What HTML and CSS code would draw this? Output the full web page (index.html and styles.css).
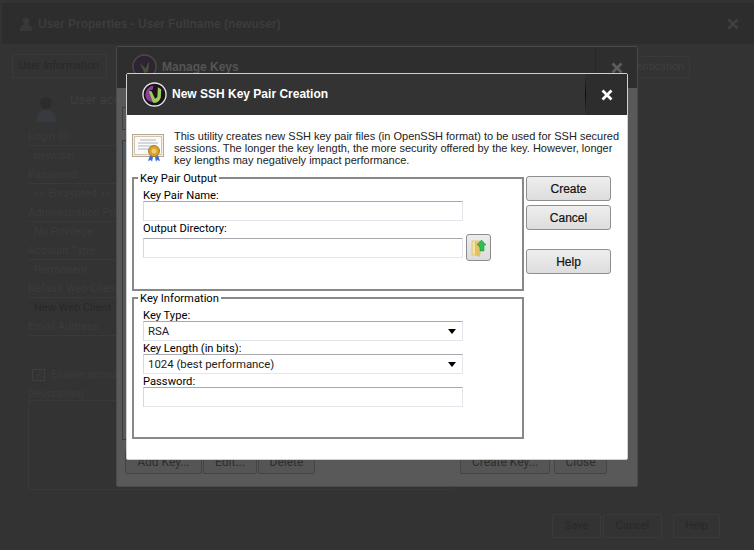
FILE: index.html
```html
<!DOCTYPE html>
<html lang="en">
<head>
<meta charset="utf-8">
<title>New SSH Key Pair Creation</title>
<link rel="stylesheet" href="styles.css">
</head>
<body>
<div class="stage">

  <section class="win-back">
    <header class="back-head">
      <svg class="back-user" viewBox="0 0 12 14" width="12" height="14"><circle cx="6" cy="4" r="3.200" fill="#383838"/><path d="M0 14c0-5 2.500-7 6-7s6 2 6 7z" fill="#383838"/></svg>
      <h1 class="back-title">User Properties - User Fullname (newuser)</h1>
      <svg class="back-close" viewBox="0 0 12 12" width="12" height="12"><path d="M1.500 1.500l9 9M10.500 1.500l-9 9" stroke="#3f3f3f" stroke-width="2.600" fill="none"/></svg>
    </header>
    <nav class="back-tabs">
      <span class="back-tab">User Information</span>
      <span class="back-spacer"></span>
      <span class="back-tab back-tab-end">Authentication</span>
    </nav>
    <div class="back-body">
      <div class="back-user-row">
        <svg class="back-avatar" viewBox="0 0 20 26" width="20" height="26"><circle cx="10" cy="7" r="6" fill="#2c2c2c"/><path d="M0 26c0-9 4-12 10-12s10 3 10 12z" fill="#373a3e"/></svg>
        <span class="back-note">User account details</span>
      </div>
      <div class="back-label">Login ID:</div>
      <div class="back-value">newuser</div>
      <div class="back-label">Password:</div>
      <div class="back-value">&lt;&lt; Encrypted &gt;&gt;</div>
      <div class="back-label">Administration Privilege:</div>
      <div class="back-value">No Privilege</div>
      <div class="back-label">Account Type:</div>
      <div class="back-value">Permanent</div>
      <div class="back-label">Default Web Client:</div>
      <div class="back-value back-strong">New Web Client</div>
      <div class="back-label">Email Address:</div>
      <div class="back-check"><span class="back-box">✓</span><span>Enable account</span></div>
      <div class="back-label back-plain">Description:</div>
      <div class="back-desc"></div>
    </div>
    <footer class="back-foot">
      <span class="back-btn back-save">Save</span>
      <span class="back-btn back-cancel">Cancel</span>
      <span class="back-btn back-help">Help</span>
    </footer>
  </section>

  <section class="win-keys">
    <header class="keys-head">
      <svg class="keys-logo" viewBox="0 0 26 26" width="25" height="25"><circle cx="13" cy="13" r="12" fill="#2c2430" stroke="#4a4a4a" stroke-width="1.500"/><path d="M8 9l5 11 4-2 1-11-4 8z" fill="#47503a"/></svg>
      <h2 class="keys-title">Manage Keys</h2>
      <span class="keys-closebox">
        <svg viewBox="0 0 12 12" width="12" height="12"><path d="M1.500 1.500l9 9M10.500 1.500l-9 9" stroke="#5c5c5c" stroke-width="2.800" fill="none"/></svg>
      </span>
    </header>
    <div class="keys-body">
      <div class="keys-tool"></div>
      <div class="keys-list"></div>
      <div class="keys-actions">
        <span class="keys-btn keys-add">Add Key...</span>
        <span class="keys-btn keys-edit">Edit...</span>
        <span class="keys-btn keys-del">Delete</span>
        <span class="keys-gap"></span>
        <span class="keys-btn keys-create">Create Key...</span>
        <span class="keys-btn keys-closebtn">Close</span>
      </div>
    </div>
  </section>

  <section class="win-new">
    <header class="new-head">
      <svg class="new-logo" viewBox="0 0 26 26" width="25" height="25">
        <circle cx="13" cy="13" r="12" fill="#1a141c" stroke="#e8e8e8" stroke-width="1.400"/>
        <path d="M3.500 13A9.500 9.500 0 0 1 12 3.600L11 8 8 8.500l4 12.500q-8.500-.5-8.500-8z" fill="#8a3f93"/>
        <path d="M7 9.500l3 0 3.500 8 2.500-2 .5-10 3.500 2-.5 9q-1.500 4-5 5l-3 0z" fill="#9ccb5a"/>
      </svg>
      <h2 class="new-title">New SSH Key Pair Creation</h2>
      <button class="new-close" type="button" aria-label="Close">
        <svg viewBox="0 0 12 12" width="12" height="12"><path d="M1.500 1.500l9 9M10.500 1.500l-9 9" stroke="#fff" stroke-width="2.800" fill="none"/></svg>
      </button>
    </header>
    <div class="new-body">
      <div class="intro">
        <svg class="cert" viewBox="0 0 32 28" width="32" height="28">
          <rect x="0.500" y="0.500" width="31" height="22" fill="#f3efe6" stroke="#b5aa98"/>
          <rect x="2.500" y="2.500" width="27" height="18" fill="#fbfaf6" stroke="#cfc6b6"/>
          <path d="M8 6h16M6 9h20M6 12h14M6 15h12" stroke="#aeb4c0" stroke-width="1"/>
          <path d="M18 21l-2 6 3-1 1 2 1-5zM26 21l2 6-3-1-1 2-1-5z" fill="#3a6fd8"/>
          <circle cx="22" cy="17" r="5.500" fill="#d8a032" stroke="#a87a20"/>
          <circle cx="22" cy="17" r="2.500" fill="#f0cb6c"/>
        </svg>
        <p class="intro-text">This utility creates new SSH key pair files (in OpenSSH format) to be used for SSH secured sessions. The longer the key length, the more security offered by the key. However, longer key lengths may negatively impact performance.</p>
      </div>
      <div class="new-main">
        <div class="groups">
          <fieldset class="group group-output">
            <legend>Key Pair Output</legend>
            <label class="lbl" for="kpn">Key Pair Name:</label>
            <input class="inp" id="kpn" type="text">
            <label class="lbl lbl-next" for="dir">Output Directory:</label>
            <div class="dir-row">
              <input class="inp" id="dir" type="text">
              <button class="browse" type="button" aria-label="Browse">
                <svg viewBox="0 0 16 18" width="16" height="18">
                  <path d="M1 2h8v14H1z" fill="#f5e3a0" stroke="#d8bd6a" stroke-width=".8"/>
                  <path d="M4 3l5-1v16l-5-2z" fill="#e4c263"/>
                  <path d="M8 7V5H6l4.500-5L15 5h-2v6H9V7z" transform="translate(0 1)" fill="#2fbf4f" stroke="#17923a" stroke-width=".5"/>
                </svg>
              </button>
            </div>
          </fieldset>
          <fieldset class="group group-info">
            <legend>Key Information</legend>
            <label class="lbl" for="ktype">Key Type:</label>
            <div class="sel" id="ktype"><span>RSA</span><i class="caret"></i></div>
            <label class="lbl lbl-next" for="klen">Key Length (in bits):</label>
            <div class="sel" id="klen"><span>1024 (best performance)</span><i class="caret"></i></div>
            <label class="lbl lbl-next" for="pw">Password:</label>
            <input class="inp" id="pw" type="password">
          </fieldset>
        </div>
        <div class="side">
          <button class="btn" type="button">Create</button>
          <button class="btn" type="button">Cancel</button>
          <button class="btn btn-help" type="button">Help</button>
        </div>
      </div>
    </div>
  </section>

</div>
</body>
</html>
```

FILE: styles.css
```css
* { box-sizing: border-box; }
html, body { margin: 0; padding: 0; }
body { width: 754px; height: 550px; overflow: hidden; background: #333; font-family: Roboto, "Open Sans", "Liberation Sans", sans-serif; }
.stage { position: relative; width: 754px; height: 550px; overflow: hidden; }

/* rear window */
.win-back { position: absolute; inset: 0; background: #333; color: #3b3b3b; font-size: 11px; display: flex; flex-direction: column; }
.back-head { height: 41px; margin: 3px 0 0 2px; background: #2d2d2d; display: flex; align-items: center; padding: 0 0 0 18px; flex: none; }
.back-user { flex: none; margin-right: 6px; }
.back-title { margin: 0; font: bold 12px "Liberation Sans", sans-serif; color: #3c3c3c; }
.back-close { margin-left: auto; margin-right: 15px; flex: none; }
.back-tabs { display: flex; height: 24px; margin-top: 10px; padding-left: 12px; padding-right: 64px; flex: none; font-size: 10.700px; }
.back-tab { border: 1px solid #393939; padding: 0 7px 0 6px; line-height: 21px; color: #282828; }
.back-tab-end { color: #3f3f3f; margin-top: 2px; height: 22px; line-height: 20px; padding: 0 5px; }
.back-spacer { flex: 1; }
.back-body { padding: 18px 0 0 28px; width: 130px; flex: none; white-space: nowrap; line-height: 19px; }
.back-user-row { display: flex; gap: 14px; height: 31px; padding-left: 8px; }
.back-avatar { flex: none; }
.back-note { color: #3e3e3e; font-size: 13px; line-height: 8px; }
.back-label { height: 19px; border-bottom: 1px solid #393939; }
.back-value { height: 19px; padding-left: 6px; }
.back-strong { color: #282828; }
.back-check { display: flex; align-items: center; gap: 6px; height: 19px; margin-top: 29px; padding-left: 4px; }
.back-box { width: 13px; height: 12px; border: 1px solid #3f3f3f; line-height: 10px; font-size: 10px; text-align: center; }
.back-plain { border: 0; }
.back-desc { height: 90px; width: 426px; border: 1px solid #393939; margin-top: -3px; }
.back-foot { position: absolute; top: 514px; left: 0; right: 0; height: 24px; display: flex; padding-left: 552px; color: #282828; }
.back-btn { border: 1px solid #3a3a3a; border-radius: 2px; text-align: center; line-height: 22px; }
.back-save { width: 49px; }
.back-cancel { width: 59px; margin-left: 2px; }
.back-help { width: 47px; margin-left: 11px; }

/* middle window */
.win-keys { position: absolute; left: 116px; top: 46px; width: 522px; height: 441px; background: #595959; border: 1px solid #4a4a4a; border-radius: 2px; color: #2e2e2e; font-size: 12px; }
.keys-head { height: 41px; background: #2e2e2e; display: flex; align-items: center; padding-left: 15px; }
.keys-logo { flex: none; margin-top: -2px; }
.keys-title { margin: 0 0 2px 5px; font: bold 12px "Liberation Sans", sans-serif; color: #555; }
.keys-closebox { margin-left: auto; width: 42px; height: 41px; border-left: 1px solid #262626; display: flex; align-items: center; justify-content: center; }
.keys-body { padding: 19px 0 0 5px; }
.keys-tool { width: 30px; height: 23px; border: 1px solid #404040; }
.keys-list { width: 505px; height: 300px; margin-top: 10px; border: 1px solid #3c3c3c; background: linear-gradient(#4f5a64, #4f5a64) 0 0 / 100% 24px no-repeat; }
.keys-actions { display: flex; margin-top: 4px; padding-left: 3px; height: 30px; }
.keys-btn { border: 1px solid #444; border-radius: 2px; height: 24px; margin-top: 6px; text-align: center; line-height: 22px; background: #555; }
.keys-add { width: 77px; }
.keys-edit { width: 54px; margin-left: 1px; }
.keys-del { width: 57px; margin-left: 1px; }
.keys-gap { width: 145px; }
.keys-create { width: 90px; }
.keys-closebtn { width: 53px; margin-left: 4px; }

/* front dialog */
.win-new { position: absolute; left: 126px; top: 73px; width: 502px; height: 387px; background: #fff; border: 1px solid #d0d0d0; border-radius: 2px; display: flex; flex-direction: column; color: #000; }
.new-head { height: 41px; flex: none; background: #333; display: flex; align-items: center; padding-left: 15px; }
.new-logo { flex: none; }
.new-title { margin: 0 0 2px 5px; font: bold 12px "Liberation Sans", sans-serif; color: #fff; }
.new-close { margin-left: auto; width: 42px; height: 41px; padding: 0; border: 0; border-left: 1px solid; border-image: linear-gradient(#333, #0c0c0c 50%, #333) 1; background: #2d2d2d; display: flex; align-items: center; justify-content: center; }
.new-body { flex: 1; padding: 15px 0 0 5px; }
.intro { display: flex; gap: 10px; height: 41px; }
.cert { flex: none; margin-top: 4px; }
.intro-text { margin: 0; width: 452px; font: 11px/12px "Liberation Sans", sans-serif; color: #222; }
.new-main { display: flex; }
.groups { width: 392px; flex: none; }
.group { margin: 0; padding: 0 0 0 9px; border: 2px solid #888; min-width: 0; width: 392px; }
.group legend { height: 14px; padding: 0 2px; margin-left: -5px; font-size: 11.200px; line-height: 16px; color: #000; }
.group-output { height: 120px; }
.group-info { height: 148px; }
.lbl { display: block; height: 13px; margin-top: 3px; font-size: 11.200px; line-height: 15px; color: #000; }
.lbl-next { margin-top: 0; }
.inp { display: block; width: 320px; height: 20px; padding: 0 4px; border: 1px solid #e2e5ec; border-top-color: #a8a8ae; border-left-color: #d8d8de; background: #fff; border-radius: 0; outline: 0; }
.sel { width: 320px; height: 20px; padding: 0 6px 0 4px; border: 1px solid #e2e5ec; border-top-color: #a8a8ae; border-left-color: #d8d8de; display: flex; align-items: center; justify-content: space-between; font-size: 11.400px; color: #222; }
.caret { width: 0; height: 0; border-left: 4px solid transparent; border-right: 4px solid transparent; border-top: 5px solid #000; }
.dir-row { display: flex; align-items: center; gap: 3px; height: 27px; }
.browse { width: 25px; height: 27px; padding: 0; border: 1px solid #8c8c8c; border-radius: 3px; background: linear-gradient(#ececec, #dcdcdc); display: flex; align-items: center; justify-content: center; }
.side { display: flex; flex-direction: column; gap: 4px; margin-left: 2px; margin-top: 5px; }
.btn { width: 85px; height: 25px; padding: 0; border: 1px solid #8f8f8f; border-radius: 3px; background: linear-gradient(#eeeeee, #dddddd); font: 12px "Liberation Sans", sans-serif; color: #111; -webkit-text-stroke: 0.2px #111; }
.btn-help { margin-top: 15px; }
```
